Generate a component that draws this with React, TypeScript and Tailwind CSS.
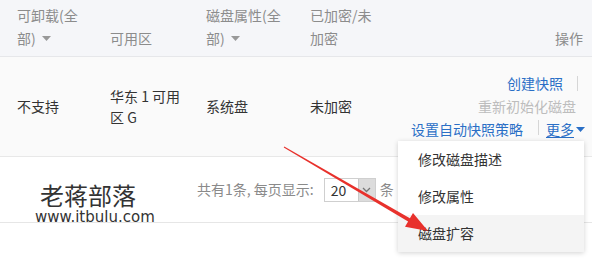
import React from "react";

const cjk = '"Noto Sans CJK SC", "Noto Sans", sans-serif';

function Caret({ className }: { className: string }) {
  return (
    <svg aria-hidden="true" width="9" height="5" viewBox="0 0 9 5" className={className}>
      <path d="M0 0h9L4.5 5z" fill="currentColor" />
    </svg>
  );
}

function Sep() {
  return <span className="inline-block w-px h-[15px] bg-[#d6d6d6]" />;
}

export default function App() {
  return (
    <div
      className="relative w-[592px] h-[274px] overflow-hidden bg-white text-[14px] text-[#333]"
      style={{ fontFamily: cjk }}
    >
      {/* table header */}
      <div className="flex items-end h-[57px] pl-[17px] pr-[9px] pb-[6px] bg-[#f5f6f9] border-b border-[#e6e7ea] text-[#8c8c8c] leading-[23px]">
        <div className="w-[93px]">
          <div>可卸载(全</div>
          <div className="flex items-center gap-[6px]">
            部) <Caret className="text-[#999]" />
          </div>
        </div>
        <div className="w-[96px]">可用区</div>
        <div className="w-[104px]">
          <div>磁盘属性(全</div>
          <div className="flex items-center gap-[6px]">
            部) <Caret className="text-[#999]" />
          </div>
        </div>
        <div className="w-[100px]">
          <div>已加密/未</div>
          <div>加密</div>
        </div>
        <div className="flex-1 text-right">操作</div>
      </div>

      {/* table row */}
      <div className="flex items-center h-[100px] pl-[17px] pr-[7px] bg-[#fafafa] border-b border-[#e8e8e8]">
        <div className="w-[93px]">不支持</div>
        <div className="w-[96px] leading-[21px]">
          <div>华东 1 可用</div>
          <div>区 G</div>
        </div>
        <div className="w-[104px]">系统盘</div>
        <div className="w-[100px]">未加密</div>
        <div className="flex-1 flex flex-col items-end leading-[23px]">
          <div className="flex items-center gap-[14px] mr-[7px] text-[#2a6fc6]">
            创建快照 <Sep />
          </div>
          <div className="mr-[9px] text-[#bdbdbd]">重新初始化磁盘</div>
          <div className="flex items-center text-[#2a6fc6]">
            <span>设置自动快照策略</span>
            <span className="ml-[15px] mr-[7px]">
              <Sep />
            </span>
            <span className="underline underline-offset-2">更多</span>
            <Caret className="ml-[2px]" />
          </div>
        </div>
      </div>

      {/* footer / pagination */}
      <div className="flex items-center h-[66px] pl-[197px] border-b border-[#e6e6e6] text-[#8a8a8a]">
        <span>共有1条, 每页显示:</span>
        <div className="flex ml-[10px] h-[24px] border border-[#cfcfcf]">
          <span className="w-[33px] pl-[6px] leading-[22px] text-[#333] bg-white">20</span>
          <span className="w-[17px] bg-[#dcdcdc] border-l border-[#c8c8c8] flex items-center justify-center">
            <svg aria-hidden="true" width="9" height="6" viewBox="0 0 9 6">
              <path d="M1 1l3.5 3.5L8 1" fill="none" stroke="#777" strokeWidth="1.3" />
            </svg>
          </span>
        </div>
        <span className="ml-[4px]">条</span>
      </div>

      {/* watermark */}
      <div className="absolute left-[35px] top-[183px] text-[#333] pointer-events-none">
        <div className="pl-[5px] text-[24px] leading-[24px]">老蒋部落</div>
        <div className="mt-[1px] text-[15px] leading-[18px]" style={{ fontFamily: '"DejaVu Sans", sans-serif' }}>
          www.itbulu.com
        </div>
      </div>

      {/* more-menu */}
      <div className="absolute left-[398px] top-[141px] w-[186px] bg-white shadow-[0_1px_5px_rgba(0,0,0,0.18)] text-[14px] text-[#333]">
        <div className="h-[37px] pl-[20px] flex items-center">修改磁盘描述</div>
        <div className="h-[37px] pl-[20px] flex items-center">修改属性</div>
        <div className="h-[37px] pl-[20px] flex items-center bg-[#f4f4f4]">磁盘扩容</div>
      </div>

      {/* red annotation arrow */}
      <svg
        aria-hidden="true"
        className="absolute left-0 top-0 pointer-events-none"
        width="592"
        height="274"
        viewBox="0 0 592 274"
      >
        <polygon
          points="284.25,146.57 409.9,218.3 413,213 428,231 405,226.8 408.1,221.5 283.75,147.43"
          fill="#e8312c"
        />
      </svg>
    </div>
  );
}
